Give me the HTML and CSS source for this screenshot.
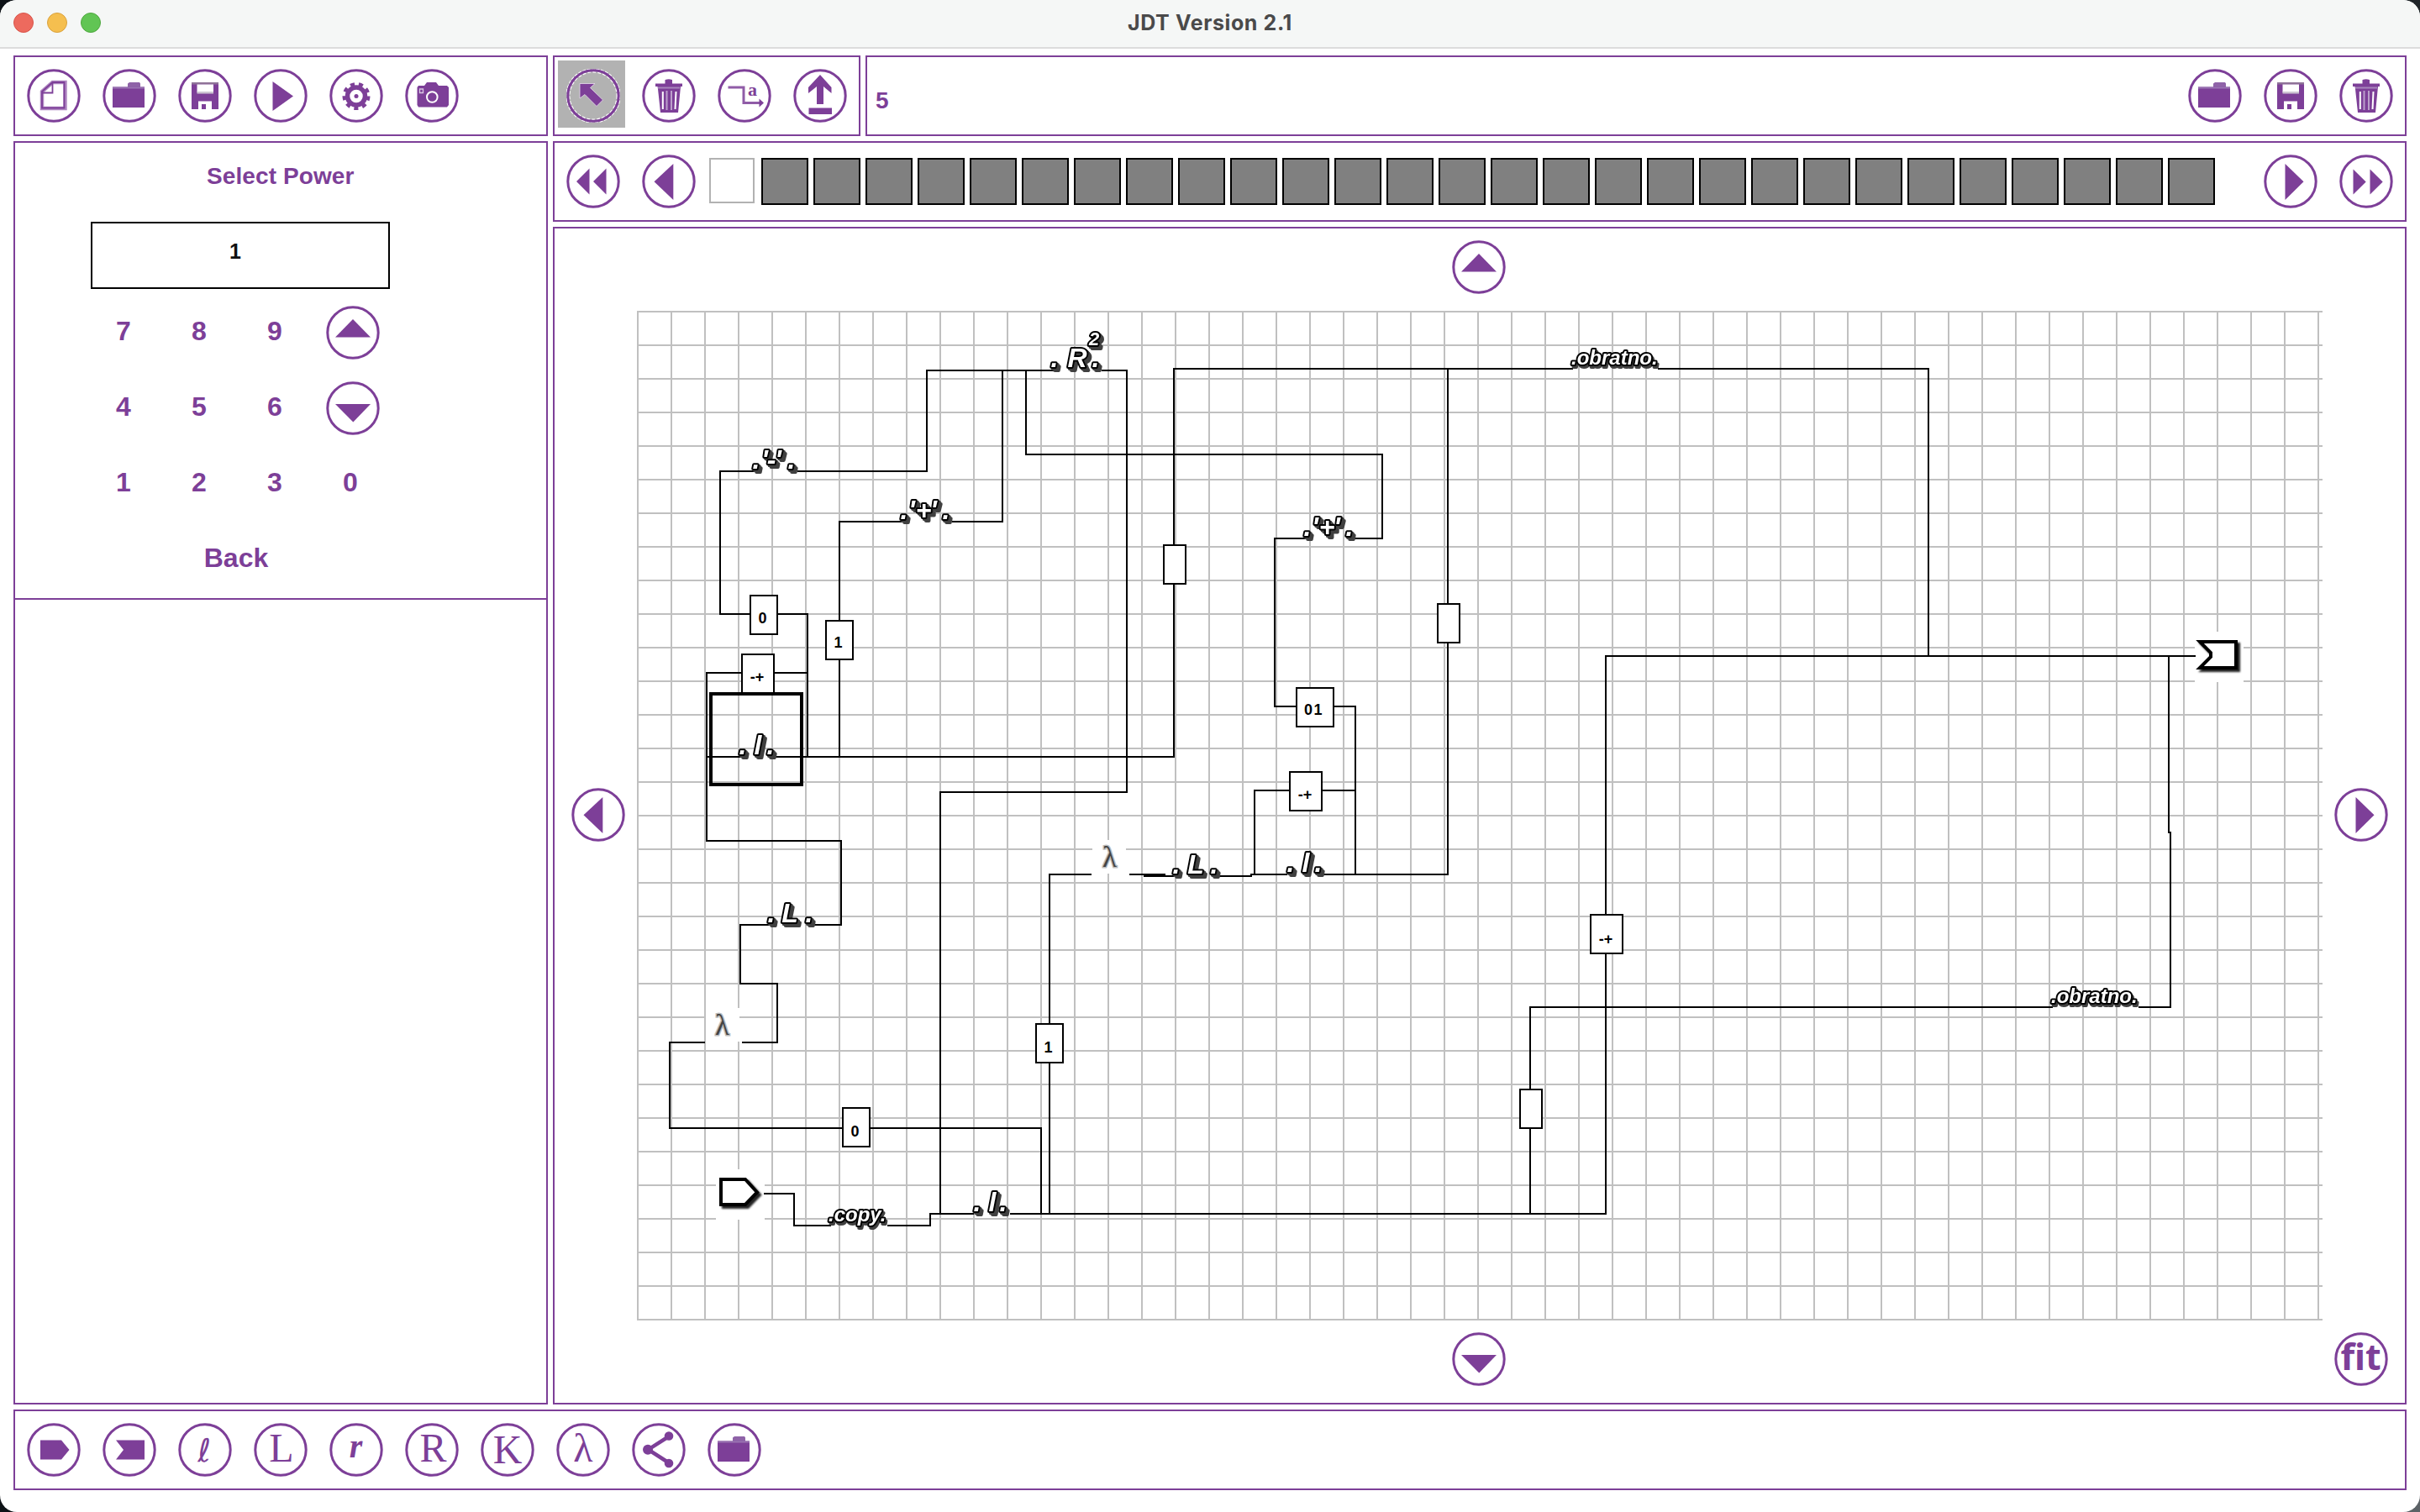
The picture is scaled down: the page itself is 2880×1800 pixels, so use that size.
FILE: index.html
```html
<!DOCTYPE html>
<html lang="en">
<head>
<meta charset="utf-8">
<title>JDT Version 2.1</title>
<link rel="stylesheet" href="styles.css">
</head>
<body>
<svg class="defs" width="0" height="0" aria-hidden="true">
  <symbol id="ring" viewBox="0 0 64 64"><circle cx="32" cy="32" r="30.2" fill="none" stroke="currentColor" stroke-width="3"/></symbol>
  <symbol id="new" viewBox="0 0 64 64"><path d="M30.500 16H45.500V47H18V27Z" fill="none" stroke="#b089c2" stroke-width="4.500"/><path d="M30.500 16H44.500V46.500H18V27ZM30.500 16V28.500H18" fill="none" stroke="currentColor" stroke-width="1.800"/></symbol>
  <symbol id="folder" viewBox="0 0 64 64"><path d="M30 22V17.500L32 16H44L45 17.500V22Z" fill="#8f63a8"/><path d="M12 21.500H50V46H12Z" fill="currentColor"/><path d="M12 21.500H50V23.500H12Z" fill="#9a74b2"/></symbol>
  <symbol id="save" viewBox="0 0 64 64"><path d="M16 16H48V48H16Z" fill="currentColor"/><path d="M16 16H48V18.500H16Z" fill="#8f7398"/><path d="M22.500 18.500H42V28H22.500Z" fill="#fff"/><path d="M22.500 27H42V29.500H22.500Z" fill="#cdc5d2"/><path d="M24 38.500H40V48H24Z" fill="#fff"/><path d="M28 42H33V48H28Z" fill="currentColor"/></symbol>
  <symbol id="play" viewBox="0 0 64 64"><path d="M22.500 15V50L47 32.500Z" fill="currentColor"/></symbol>
  <symbol id="gear" viewBox="0 0 64 64"><circle cx="32" cy="32.500" r="14.500" fill="none" stroke="currentColor" stroke-width="4" stroke-dasharray="5.110 5.012"/><circle cx="32" cy="32.500" r="10.500" fill="none" stroke="currentColor" stroke-width="5.500"/><circle cx="32" cy="32.500" r="2.500" fill="currentColor"/></symbol>
  <symbol id="camera" viewBox="0 0 64 64"><path d="M16 20H23L26 16H37L40 20H50L52 22V43L50 45.500H16L14.500 43V22Z" fill="currentColor"/><circle cx="32.300" cy="33.500" r="6.300" fill="none" stroke="#fff" stroke-width="2"/><path d="M17.500 24H21.500V28.500H17.500Z" fill="none" stroke="#d9c8e2" stroke-width="1.300"/></symbol>
  <symbol id="select" viewBox="0 0 64 64"><g fill="none" stroke="#fff" stroke-width="1.400"><circle cx="32" cy="32" r="32" stroke-dasharray="4 1.500"/><circle cx="32" cy="32" r="28.200" stroke-dasharray="4 2"/></g><path d="M16 17.500H34L28.500 22.500L43.500 37L36 44.500L22 30.500L16 35Z" fill="currentColor" stroke="#e7dcec" stroke-width=".8"/></symbol>
  <symbol id="trash" viewBox="0 0 64 64"><path d="M27.500 13Q32 11.500 36 13V17.500H48V21H46L43 52H22L19 24 18.500 21H16V17.500H27.500Z" fill="currentColor"/><path d="M19 21.500H45V23.500H19Z" fill="#a785bb"/><path d="M24.800 27V48M40.500 27L39.500 48" stroke="#fff" stroke-width="2"/><path d="M29.500 26V49M35 26V49" stroke="#bb9fcb" stroke-width="2"/></symbol>
  <symbol id="wire" viewBox="0 0 64 64"><path d="M12.500 22H31V40.500H52" fill="none" stroke="currentColor" stroke-width="3" opacity=".85"/><path d="M49.500 35.500V45.500L55 40.500Z" fill="currentColor"/></symbol>
  <symbol id="upload" viewBox="0 0 64 64"><path d="M32 7L45.500 22V29L36 21V42H28V21L18 29V22ZM18.500 46.500H46V54H18.500Z" fill="currentColor"/></symbol>
  <symbol id="first" viewBox="0 0 64 64"><path d="M12 32L27.500 16.500V47.500ZM32 32L47.500 16.500V47.500Z" fill="currentColor"/></symbol>
  <symbol id="last" viewBox="0 0 64 64"><path d="M31.700 32.500L16.500 17.500V47.500ZM51.700 32.500L36.500 17.500V47.500Z" fill="currentColor"/></symbol>
  <symbol id="prev" viewBox="0 0 64 64"><path d="M14.500 32.300L37.300 11V54Z" fill="currentColor"/></symbol>
  <symbol id="next" viewBox="0 0 64 64"><path d="M47.500 32.300L25.500 11V54Z" fill="currentColor"/></symbol>
  <symbol id="up" viewBox="0 0 64 64"><path d="M11 37.500L32 16L53 37.500Z" fill="currentColor"/></symbol>
  <symbol id="down" viewBox="0 0 64 64"><path d="M11 27L32.300 48.500L53 27Z" fill="currentColor"/></symbol>
  <symbol id="start" viewBox="0 0 64 64"><path d="M16 20.500H41L50.500 32L41 43.500H16Z" fill="currentColor"/></symbol>
  <symbol id="end" viewBox="0 0 64 64"><path d="M16 20.500H50V43.500H16L25 32Z" fill="currentColor"/></symbol>
  <symbol id="share" viewBox="0 0 64 64"><path d="M44 16L19.500 31.700L44 47.500" fill="none" stroke="currentColor" stroke-width="4.500"/><g fill="currentColor"><circle cx="44" cy="15.500" r="5.300"/><circle cx="19" cy="31.700" r="6"/><circle cx="44" cy="48" r="5.300"/></g></symbol>
</svg>

<div class="window">
  <header class="titlebar">
    <div class="lights"><i class="light red"></i><i class="light yellow"></i><i class="light green"></i></div>
    <h1>JDT Version 2.1</h1>
  </header>

  <main class="layout">
    <div class="body">
      <aside class="side">
        <nav class="panel toolbar">
          <svg class="icon"><use href="#ring"/><use href="#new"/></svg>
          <svg class="icon"><use href="#ring"/><use href="#folder"/></svg>
          <svg class="icon"><use href="#ring"/><use href="#save"/></svg>
          <svg class="icon"><use href="#ring"/><use href="#play"/></svg>
          <svg class="icon"><use href="#ring"/><use href="#gear"/></svg>
          <svg class="icon"><use href="#ring"/><use href="#camera"/></svg>
        </nav>
        <section class="panel power">
          <div class="power-form">
            <h2>Select Power</h2>
            <div class="value">1</div>
            <div class="keypad">
              <span>7</span><span>8</span><span>9</span><svg class="icon key-icon"><use href="#ring"/><use href="#up"/></svg>
              <span>4</span><span>5</span><span>6</span><svg class="icon key-icon"><use href="#ring"/><use href="#down"/></svg>
              <span>1</span><span>2</span><span>3</span><span>0</span>
              <span class="back">Back</span>
            </div>
          </div>
        </section>
      </aside>

      <div class="work">
        <div class="top-row">
          <nav class="panel toolbar tools">
            <span class="tool selected"><svg class="icon"><use href="#select"/><use href="#ring"/></svg></span>
            <svg class="icon"><use href="#ring"/><use href="#trash"/></svg>
            <svg class="icon"><use href="#ring"/><use href="#wire"/><text class="wire-letter" x="36" y="31.500">a</text></svg>
            <svg class="icon"><use href="#ring"/><use href="#upload"/></svg>
          </nav>
          <nav class="panel toolbar tape-tools">
            <span class="number">5</span>
            <svg class="icon"><use href="#ring"/><use href="#folder"/></svg>
            <svg class="icon"><use href="#ring"/><use href="#save"/></svg>
            <svg class="icon"><use href="#ring"/><use href="#trash"/></svg>
          </nav>
        </div>

        <nav class="panel toolbar tape">
          <svg class="icon"><use href="#ring"/><use href="#first"/></svg>
          <svg class="icon"><use href="#ring"/><use href="#prev"/></svg>
          <div class="cells">
            <i class="cell current"></i><i class="cell"></i><i class="cell"></i><i class="cell"></i><i class="cell"></i><i class="cell"></i><i class="cell"></i><i class="cell"></i><i class="cell"></i><i class="cell"></i><i class="cell"></i><i class="cell"></i><i class="cell"></i><i class="cell"></i><i class="cell"></i><i class="cell"></i><i class="cell"></i><i class="cell"></i><i class="cell"></i><i class="cell"></i><i class="cell"></i><i class="cell"></i><i class="cell"></i><i class="cell"></i><i class="cell"></i><i class="cell"></i><i class="cell"></i><i class="cell"></i><i class="cell"></i>
          </div>
          <svg class="icon"><use href="#ring"/><use href="#next"/></svg>
          <svg class="icon"><use href="#ring"/><use href="#last"/></svg>
        </nav>

        <section class="panel canvas">
          <svg class="icon pan-up"><use href="#ring"/><use href="#up"/></svg>
          <svg class="icon pan-left"><use href="#ring"/><use href="#prev"/></svg>
          <svg class="diagram" viewBox="758 370 2006 1202">
            <defs>
              <pattern id="grid" x="758" y="370" width="40" height="40" patternUnits="userSpaceOnUse"><path d="M0 0H40V2H2V40H0Z" fill="#c0c0c0"/></pattern>
            </defs>
            <rect x="758" y="370" width="2006" height="1202" fill="url(#grid)" shape-rendering="crispEdges"/>

            <g class="blank">
              <path d="M1300 1000h40v40h-40zM840 1200h40v40h-40zM852 1392h58v60h-58zM2612 752h58v60h-58z"/>
            </g>

            <g class="wires">
              <path d="M900 561H857V731H961V901"/>
              <path d="M950 561H1103V441H1256M1312 441H1341V943H1119V1445"/>
              <path d="M1076 621H999V901M1134 621H1193V441M1221 441V541H1645V641H1613"/>
              <path d="M882 901H841M961 801H841V1001H1001V1101H968M924 901H1397V439H1871M1974 439H2295V781"/>
              <path d="M914 1101H881V1171H925V1241H884M838 1241H797V1343H1239V1445"/>
              <path d="M910 1421H945V1459H988M1057 1459H1107V1445H1158M1203 1445H1911V781H2612"/>
              <path d="M1298 1041H1249V1445M1345 1041H1386M1362 1043H1396M1451 1043H1489V1041H1531M1575 1041H1723V439"/>
              <path d="M1554 641H1517V841H1613V1041M1613 941H1493V1041"/>
              <path d="M2442 1199H1821V1445M2546 1199H2583V991H2581V781"/>
            </g>

            <g class="boxes">
              <rect x="893" y="709" width="32" height="46"/>
              <rect x="983" y="739" width="32" height="46"/>
              <rect x="883" y="779" width="38" height="46"/>
              <rect x="1385" y="649" width="26" height="46"/>
              <rect x="1711" y="719" width="26" height="46"/>
              <rect x="1543" y="819" width="44" height="46"/>
              <rect x="1535" y="919" width="38" height="46"/>
              <rect x="1233" y="1219" width="32" height="46"/>
              <rect x="1003" y="1319" width="32" height="46"/>
              <rect x="1809" y="1297" width="26" height="46"/>
              <rect x="1893" y="1089" width="38" height="46"/>
            </g>
            <g class="box-text">
              <text x="907.500" y="741.500">0</text>
              <text x="997.500" y="771">1</text>
              <text x="901" y="811.500">-+</text>
              <text class="wide" x="1563.500" y="851">01</text>
              <text x="1553" y="951.500">-+</text>
              <text x="1247.500" y="1253">1</text>
              <text x="1017.500" y="1353">0</text>
              <text x="1911" y="1123.500">-+</text>
            </g>
            <rect class="selection" x="846" y="826" width="108" height="108"/>

            <g class="labels">
              <text x="1255 1282 1304" y="437">.R.</text>
              <text class="power-mark" x="1302" y="411">2</text>
              <text x="900 910 918 926 942" y="558">.'-'.</text>
              <text x="1076 1085 1099 1111 1126" y="618">.'+'.</text>
              <text x="1556 1565 1579 1591 1606" y="638">.'+'.</text>
              <text x="884 902 917" y="898">.l.</text>
              <text x="1536 1554 1569" y="1038">.l.</text>
              <text x="1163 1181 1194" y="1442">.l.</text>
              <text x="918 940 963" y="1098">.L.</text>
              <text x="1400 1423 1445" y="1040">.L.</text>
            </g>
            <g class="labels words">
              <text x="1870" y="433.500">.obratno.</text>
              <text x="2441" y="1193.500">.obratno.</text>
              <text x="986" y="1453.500">.copy.</text>
            </g>
            <g class="lambdas">
              <text x="1312" y="1032">λ</text>
              <text x="851" y="1232">λ</text>
            </g>
            <g class="ports">
              <path d="M858 1404H887L901 1419.500L887 1434H858Z"/>
              <path d="M2618 764H2661V795H2618L2631 782V777Z"/>
            </g>
          </svg>
          <svg class="icon pan-right"><use href="#ring"/><use href="#next"/></svg>
          <svg class="icon pan-down"><use href="#ring"/><use href="#down"/></svg>
          <svg class="icon fit"><use href="#ring"/><text class="fit-text" x="31.500" y="45">fit</text></svg>
        </section>
      </div>
    </div>

    <nav class="panel toolbar palette">
      <svg class="icon"><use href="#ring"/><use href="#start"/></svg>
      <svg class="icon"><use href="#ring"/><use href="#end"/></svg>
      <svg class="icon"><use href="#ring"/><text class="letter script-l" x="31" y="45.500">ℓ</text></svg>
      <svg class="icon"><use href="#ring"/><text class="letter" x="33" y="45.500">L</text></svg>
      <svg class="icon"><use href="#ring"/><text class="letter script-r" x="31.500" y="41">r</text></svg>
      <svg class="icon"><use href="#ring"/><text class="letter" x="33.500" y="45.500">R</text></svg>
      <svg class="icon"><use href="#ring"/><text class="letter" x="32" y="47.500">K</text></svg>
      <svg class="icon"><use href="#ring"/><text class="letter" x="32" y="45.500">λ</text></svg>
      <svg class="icon"><use href="#ring"/><use href="#share"/></svg>
      <svg class="icon"><use href="#ring"/><use href="#folder"/></svg>
    </nav>
  </main>
</div>
</body>
</html>
```
FILE: styles.css
```css
:root {
  --purple: #7d3f98;
}

* {
  box-sizing: border-box;
}

html,
body {
  margin: 0;
  height: 100%;
}

body {
  background: linear-gradient(135deg, #0d1216 50%, #5c6266 100%);
  font-family: "Liberation Sans", Arial, sans-serif;
  overflow: hidden;
}

.defs {
  position: absolute;
}

.window {
  width: 2880px;
  height: 1800px;
  display: flex;
  flex-direction: column;
  background: #fff;
  border-radius: 20px;
  overflow: hidden;
}

.titlebar {
  height: 58px;
  flex: none;
  display: grid;
  grid-template-columns: 1fr auto 1fr;
  align-items: center;
  padding: 0 16px 2px;
  background: #f5f7f6;
  border-bottom: 2px solid #dcdcdc;
}

.titlebar h1 {
  margin: 0;
  font: 700 25px/30px Inter, sans-serif;
  letter-spacing: 0.6px;
  color: #4a4a4a;
}

.lights {
  display: flex;
  gap: 16px;
}

.light {
  width: 24px;
  height: 24px;
  border-radius: 50%;
}

.red { background: #ed6a5e; border: 1px solid #d8544a; }
.yellow { background: #f5bf4f; border: 1px solid #d9a13d; }
.green { background: #61c554; border: 1px solid #4fa73f; }

.layout {
  flex: 1;
  display: flex;
  flex-direction: column;
  gap: 6px;
  padding: 8px 16px 26px;
}

.body {
  flex: 1;
  display: flex;
  gap: 6px;
}

.panel {
  border: 2px solid var(--purple);
  color: var(--purple);
}

.toolbar {
  height: 96px;
  flex: none;
  display: flex;
  align-items: center;
  gap: 26px;
  padding: 0 14px;
}

.icon {
  display: block;
  width: 64px;
  height: 64px;
  flex: none;
  overflow: visible;
}

.side {
  width: 636px;
  display: flex;
  flex-direction: column;
  gap: 6px;
}

.power {
  flex: 1;
}

.power-form {
  height: 544px;
  border-bottom: 2px solid var(--purple);
  padding: 22px 84px 0;
  display: flex;
  flex-direction: column;
}

.power-form h2 {
  margin: 0;
  padding-left: 144px;
  font-size: 28px;
  line-height: 36px;
  letter-spacing: 0.1px;
}

.value {
  width: 356px;
  height: 80px;
  margin: 36px 0 5px 6px;
  border: 2px solid #000;
  padding-right: 12px;
  font-size: 25px;
  font-weight: bold;
  line-height: 67px;
  text-align: center;
  color: #111;
}

.keypad {
  display: grid;
  grid-template-columns: repeat(4, 90px);
  grid-auto-rows: 90px;
  justify-items: center;
  font-size: 32px;
  font-weight: bold;
  line-height: 90px;
}

.key-icon {
  margin: 15px -3px 0 3px;
}

.back {
  grid-column: 1 / -1;
  margin-right: 2px;
}

.work {
  flex: 1;
  display: flex;
  flex-direction: column;
  gap: 6px;
}

.top-row {
  display: flex;
  gap: 6px;
}

.tools {
  width: 366px;
}

.tool {
  position: relative;
}

.selected::before {
  content: "";
  position: absolute;
  left: -10px;
  top: -10px;
  width: 80px;
  height: 80px;
  background: #b2b2b2;
}

.selected .icon {
  position: relative;
}

.tape-tools {
  flex: 1;
}

.number {
  flex: 1;
  padding: 12px 0 0;
  margin-left: -4px;
  font-size: 28px;
  font-weight: bold;
}

.cells {
  flex: 1;
  display: flex;
  gap: 6px;
  margin-left: -10px;
}

.cell {
  width: 56px;
  height: 56px;
  background: #808080;
  border: 2px solid #000;
}

.cell.current {
  width: 54px;
  height: 54px;
  margin-right: 2px;
  background: #fff;
  border-color: #b2b2b2;
}

.canvas {
  flex: 1;
  display: grid;
  grid-template-columns: 98px 2006px 98px;
  grid-template-rows: 98px 1202px 98px;
}

.pan-up {
  grid-area: 1 / 2;
  justify-self: center;
  margin: 14px 2px 0 0;
}

.pan-left {
  grid-area: 2 / 1;
  place-self: center end;
  margin: 0 14px 2px 0;
}

.diagram {
  grid-area: 2 / 2;
  width: 2006px;
  height: 1202px;
  display: block;
}

.pan-right {
  grid-area: 2 / 3;
  align-self: center;
  margin: 0 0 2px 14px;
}

.pan-down {
  grid-area: 3 / 2;
  justify-self: center;
  margin: 14px 2px 0 0;
}

.fit {
  grid-area: 3 / 3;
  margin: 14px 0 0 14px;
}

.blank {
  fill: #fff;
}

.wires,
.boxes {
  fill: none;
  stroke: #000;
  stroke-width: 2;
  stroke-linecap: square;
  shape-rendering: crispEdges;
}

.boxes {
  fill: #fff;
}

.box-text {
  font-size: 18px;
  font-weight: bold;
  text-anchor: middle;
}

.wide {
  letter-spacing: 1.5px;
}

.selection {
  fill: none;
  stroke: #000;
  stroke-width: 4;
}

.labels {
  font-size: 32px;
  font-weight: bold;
  font-style: italic;
  text-anchor: middle;
  fill: #fff;
  stroke: #000;
  stroke-width: 4;
  stroke-linejoin: round;
  paint-order: stroke;
  filter: drop-shadow(2px 2px 0 #404040) drop-shadow(2px 2px 0 #404040);
}

.power-mark {
  font-size: 22px;
}

.labels.words {
  font-size: 24px;
  text-anchor: start;
  filter: drop-shadow(2px 3px 0 #404040);
}

.lambdas {
  font: 35px "Liberation Serif", "Times New Roman", serif;
  fill: #444;
  stroke: #bdbdbd;
  stroke-width: 3;
  paint-order: stroke;
}

.ports {
  fill: #fff;
  stroke: #000;
  stroke-width: 4;
  filter: drop-shadow(3px 3px 1px #222);
}

.letter {
  font: 48px "Liberation Serif", "Times New Roman", serif;
  text-anchor: middle;
  fill: var(--purple);
}

.script-l {
  font: italic 38px "DejaVu Serif", "DejaVu Sans", serif;
}

.script-r {
  font-size: 40px;
  font-weight: bold;
  font-style: italic;
}

.wire-letter {
  font: bold 22px "Liberation Serif", serif;
  fill: var(--purple);
}

.fit-text {
  font: bold 43px "Noto Sans", sans-serif;
  text-anchor: middle;
  fill: var(--purple);
}
```
